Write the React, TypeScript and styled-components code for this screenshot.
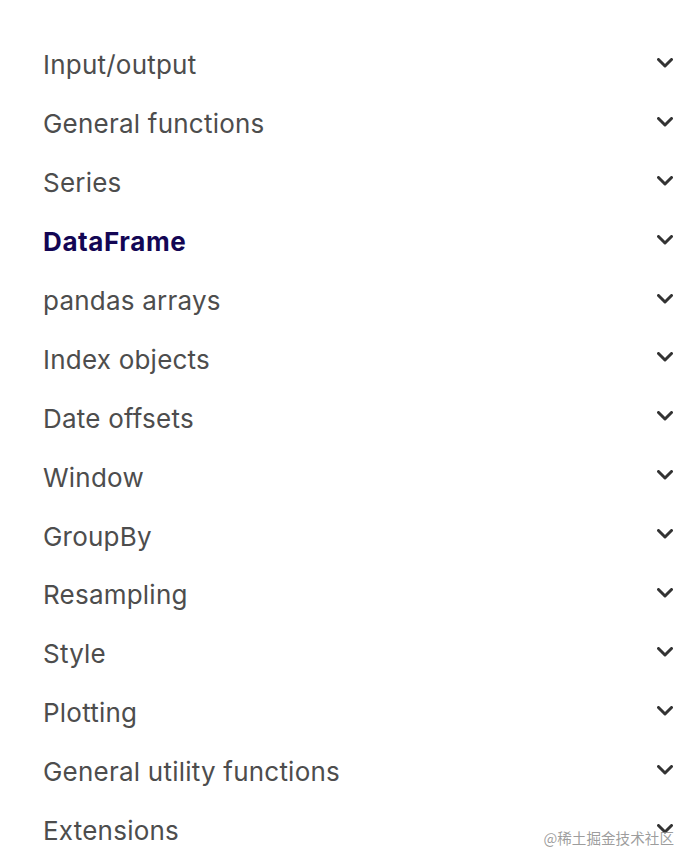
import React from 'react';
import styled, { createGlobalStyle } from 'styled-components';

const GlobalStyle = createGlobalStyle`
  html, body {
    margin: 0;
    padding: 0;
    background: #ffffff;
  }
  body {
    font-family: Inter, "Noto Sans", "Liberation Sans", sans-serif;
  }
`;

const sections = [
  'Input/output',
  'General functions',
  'Series',
  'DataFrame',
  'pandas arrays',
  'Index objects',
  'Date offsets',
  'Window',
  'GroupBy',
  'Resampling',
  'Style',
  'Plotting',
  'General utility functions',
  'Extensions',
];

const Chevron = () => (
  <svg width="16" height="10" viewBox="0 0 16 10" fill="none">
    <path d="M1.5 1.5 L8 8 L14.5 1.5" stroke="#333" strokeWidth="3" strokeLinecap="round" strokeLinejoin="round" />
  </svg>
);

const App = () => {
  return (
    <Page>
      <GlobalStyle />
      <Nav>
        {sections.map((name) => (
          <Row key={name}>
            <Label active={name === 'DataFrame'}>{name}</Label>
            <Toggle>
              <Chevron />
            </Toggle>
          </Row>
        ))}
      </Nav>
      <Watermark>@稀土掘金技术社区</Watermark>
    </Page>
  );
};

const Page = styled.div`
  position: relative;
  width: 696px;
  height: 868px;
  overflow: hidden;
  background: #fff;
`;

const Nav = styled.ul`
  list-style: none;
  margin: 0;
  padding: 36px 23px 0 43px;
`;

const Row = styled.li`
  display: flex;
  align-items: center;
  justify-content: space-between;
  height: 58.9px;
`;

const Label = styled.span<{ active?: boolean }>`
  font-size: 26px;
  line-height: 30px;
  color: ${(p) => (p.active ? '#130654' : '#4d4d4d')};
  font-weight: ${(p) => (p.active ? 700 : 400)};
  letter-spacing: ${(p) => (p.active ? '0.6px' : '0.22px')};
`;

const Toggle = styled.span`
  display: flex;
  align-items: center;
  margin-top: -5px;
`;

const Watermark = styled.div`
  position: absolute;
  right: 22px;
  bottom: 20px;
  font-family: "Noto Sans CJK SC", sans-serif;
  font-size: 14.6px;
  color: rgba(140, 140, 140, 0.85);
`;

export default App;
